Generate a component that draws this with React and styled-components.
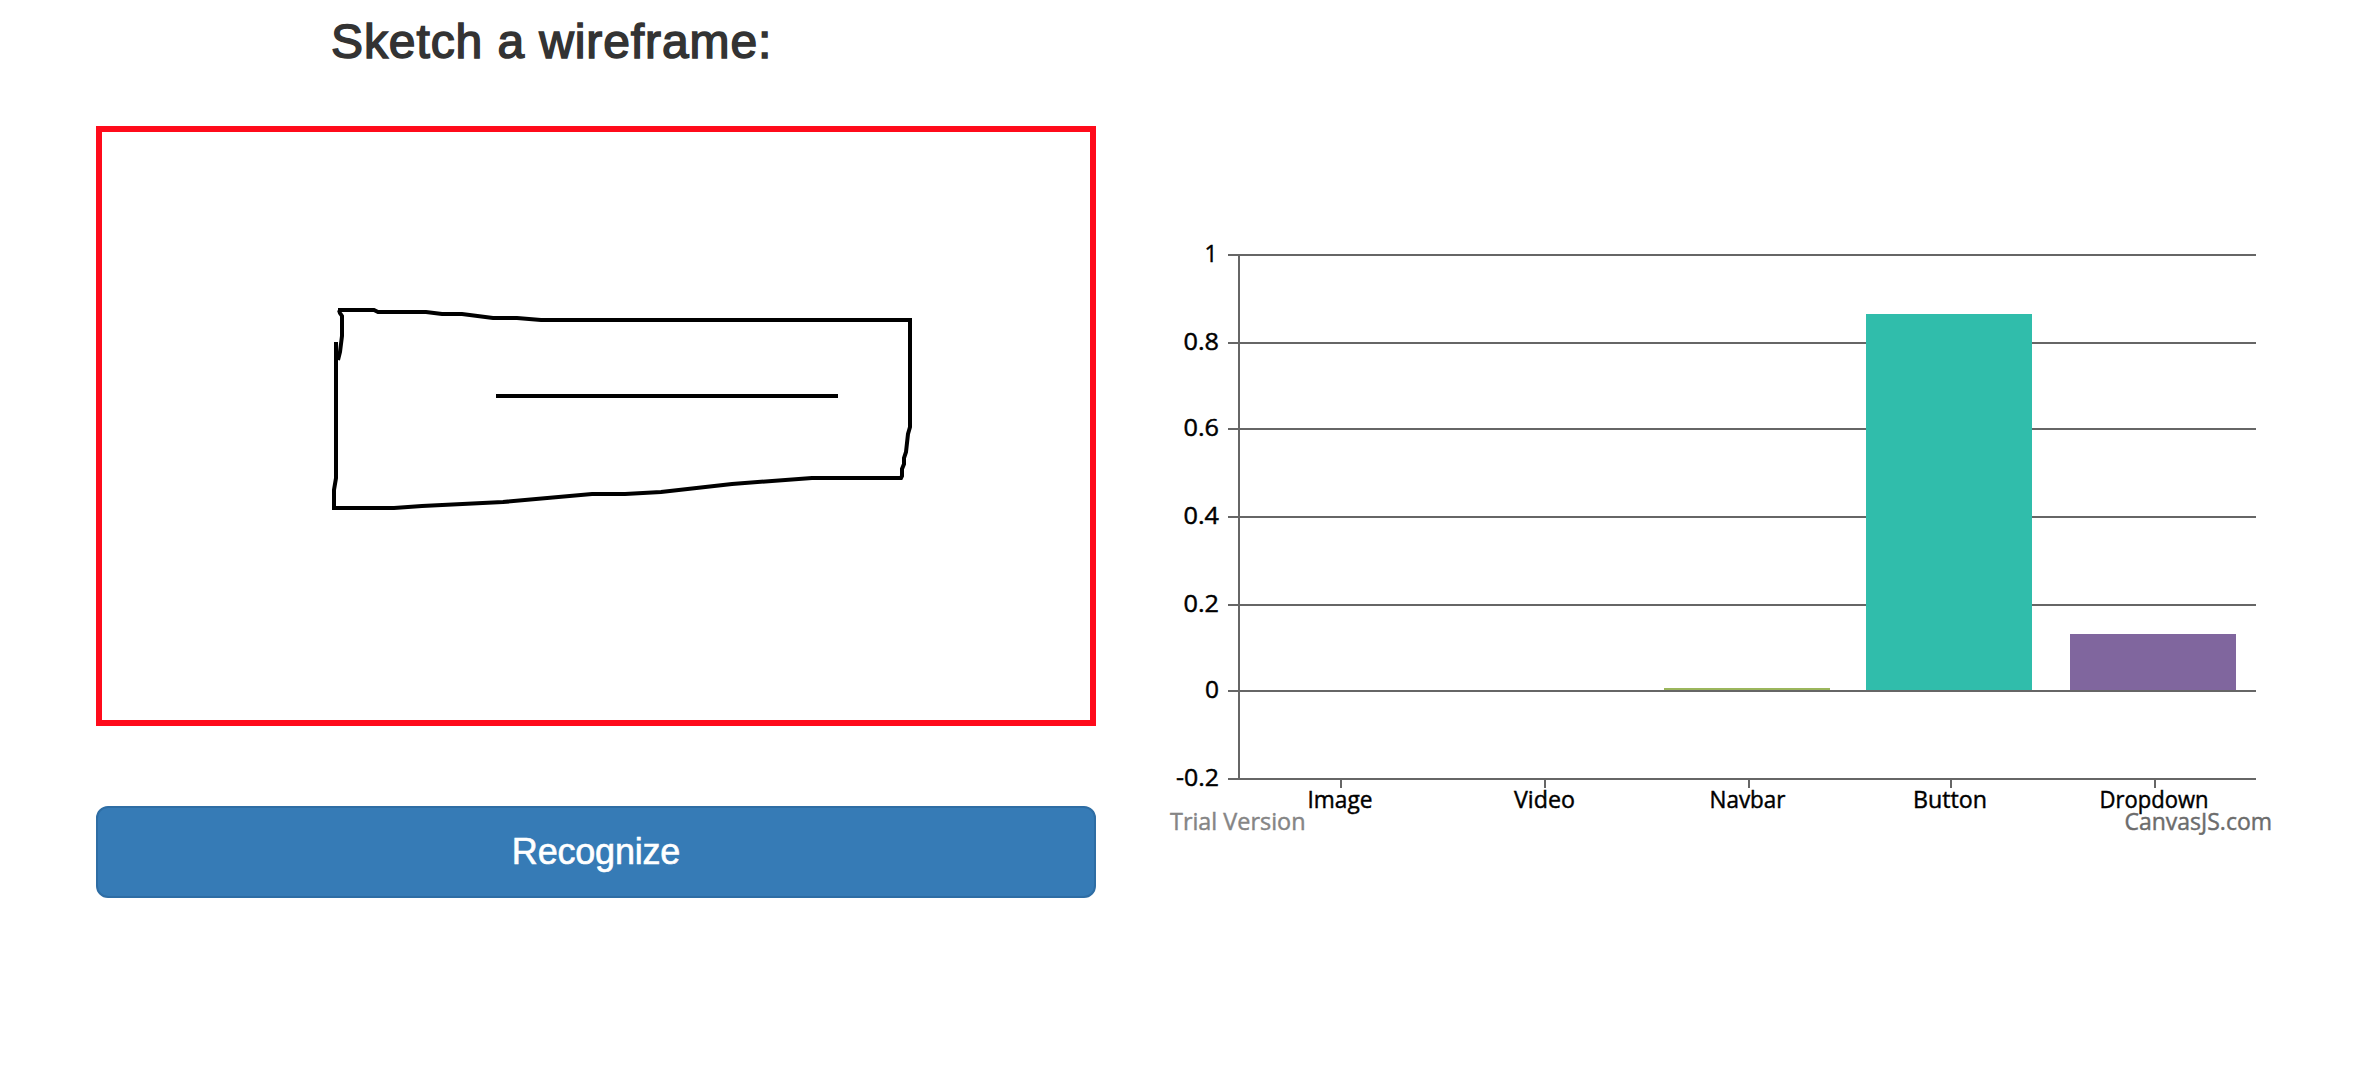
import React from "react";
import styled, { createGlobalStyle } from "styled-components";

const GlobalStyle = createGlobalStyle`
  *, *::before, *::after { box-sizing: border-box; }
  body {
    margin: 0;
    background: #fff;
    color: #333;
    font-family: "Liberation Sans", Arial, sans-serif;
  }
`;

const Page = styled.main`
  display: flex;
  align-items: flex-start;
  gap: 64px;
  min-height: 1076px;
  padding-left: 96px;
  overflow: hidden;
`;

const SketchColumn = styled.section`
  display: flex;
  flex-direction: column;
  width: 1000px;
`;

const Title = styled.h1`
  margin: 15px 0 58px;
  padding-left: 235px;
  font-size: 48px;
  font-weight: 400;
  line-height: 53px;
  letter-spacing: 0.9px;
  white-space: nowrap;
  -webkit-text-stroke: 1.5px #333;
`;

const SketchPad = styled.div`
  height: 600px;
  border: 6px solid #ff0b1b;
`;

const Drawing = styled.svg`
  display: block;
  fill: none;
  stroke: #000;
  stroke-width: 4px;
`;

const RecognizeButton = styled.button`
  height: 92px;
  margin-top: 80px;
  padding: 0;
  border: 2px solid #2e6da4;
  border-radius: 12px;
  background: #367bb6;
  color: #fff;
  font-family: inherit;
  font-size: 36px;
  line-height: 48px;
  letter-spacing: -0.2px;
  -webkit-text-stroke: 0.6px #fff;
`;

const ChartColumn = styled.section`
  padding-top: 200px;
`;

const Chart = styled.svg`
  display: block;
  font-family: "Open Sans", "Noto Sans", sans-serif;
  font-size: 24px;
`;

const AxisLine = styled.rect`
  fill: #666;
`;

const Label = styled.text`
  fill: ${(p) => p.$color || "#000"};
  stroke: ${(p) => p.$color || "#000"};
  stroke-width: 0.45px;
`;

const gridLines = [
  { label: "1", y: 14, x: 44.5, width: 13 },
  { label: "0.8", y: 102, x: 23.5, width: 35.5 },
  { label: "0.6", y: 188, x: 23.5, width: 35.5 },
  { label: "0.4", y: 276, x: 23.5, width: 35.5 },
  { label: "0.2", y: 364, x: 23.5, width: 35.5 },
  { label: "0", y: 450, x: 45, width: 14 },
  { label: "-0.2", y: 538, x: 16, width: 43 },
];

const categories = [
  { label: "Image", tick: 180, x: 147.5, width: 65 },
  { label: "Video", tick: 384, x: 354, width: 61 },
  { label: "Navbar", tick: 588, x: 549.5, width: 76 },
  { label: "Button", tick: 790, x: 753, width: 74 },
  { label: "Dropdown", tick: 994, x: 939.5, width: 109 },
];

const bars = [
  { x: 504, top: 448, color: "#9bb65c" },
  { x: 706, top: 74, color: "#30bdab" },
  { x: 910, top: 394, color: "#80669e" },
];

function ChartLabel({ x, y, width, color, children }) {
  return (
    <Label x={x} y={y} textLength={width} lengthAdjust="spacingAndGlyphs" $color={color}>
      {children}
    </Label>
  );
}

function PredictionChart() {
  return (
    <Chart width="1130" height="650" viewBox="0 -40 1130 650">
      {gridLines.map((g) => (
        <AxisLine key={g.label} x="68" y={g.y} width="1028" height="2" />
      ))}
      {bars.map((b) => (
        <rect key={b.x} x={b.x} y={b.top} width="166" height={450 - b.top} fill={b.color} />
      ))}
      <AxisLine x="78" y="14" width="2" height="526" />
      {categories.map((c) => (
        <AxisLine key={c.label} x={c.tick} y="540" width="2" height="8" />
      ))}
      {gridLines.map((g) => (
        <ChartLabel key={g.label} x={g.x} y={g.y + 8} width={g.width}>
          {g.label}
        </ChartLabel>
      ))}
      {categories.map((c) => (
        <ChartLabel key={c.label} x={c.x} y={568} width={c.width}>
          {c.label}
        </ChartLabel>
      ))}
      <ChartLabel x={10} y={590} width={135.5} color="#858585">Trial Version</ChartLabel>
      <ChartLabel x={964.5} y={590} width={147.5} color="#6c6c6c">CanvasJS.com</ChartLabel>
    </Chart>
  );
}

export default function App() {
  return (
    <>
      <GlobalStyle />
      <Page>
        <SketchColumn>
          <Title>Sketch a wireframe:</Title>
          <SketchPad>
            <Drawing width="988" height="588" viewBox="102 132 988 588">
              <path d="M336 342V478L334 490V508H394L422 506L503 502L592 494H625L661 492L732 484L812 478H901L902 476V469L904 464V458L906 452L908 434L910 427V320H541L517 318H493L462 314H442L426 312H378L374 310H338" />
              <path d="M339 310L340 313L342 316V336L340 352L338 360" />
              <path d="M496 396H838" />
            </Drawing>
          </SketchPad>
          <RecognizeButton type="button">Recognize</RecognizeButton>
        </SketchColumn>
        <ChartColumn>
          <PredictionChart />
        </ChartColumn>
      </Page>
    </>
  );
}
